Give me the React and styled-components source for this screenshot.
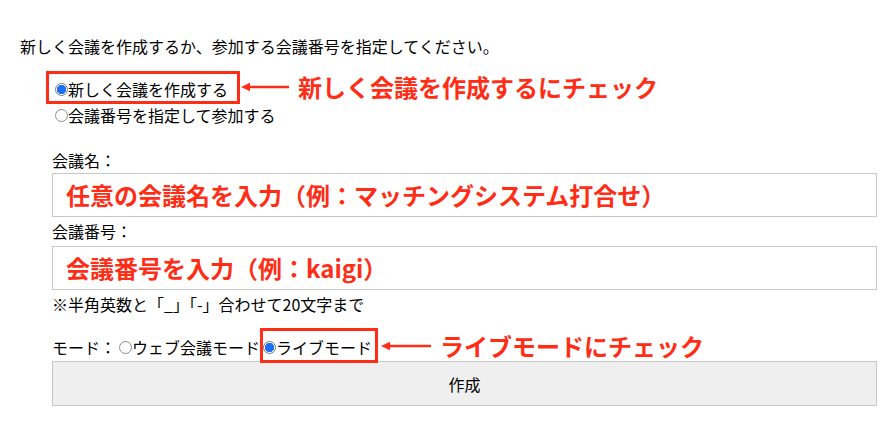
import React from "react"
import styled, { createGlobalStyle } from "styled-components"

const RED = "#ff2d16"

export default function App() {
  return (
    <Page>
      <GlobalStyle />
      <Intro>新しく会議を作成するか、参加する会議番号を指定してください。</Intro>
      <Form>
        <Choices>
          <Choice>
            <Radio type="radio" name="kind" defaultChecked />
            新しく会議を作成する
          </Choice>
          <Choice>
            <Radio type="radio" name="kind" />
            会議番号を指定して参加する
          </Choice>
        </Choices>

        <FieldLabel $mt={20}>会議名：</FieldLabel>
        <TextBox $mt={1} placeholder="任意の会議名を入力（例：マッチングシステム打合せ）" />

        <FieldLabel $mt={2}>会議番号：</FieldLabel>
        <TextBox $mt={3} placeholder="会議番号を入力（例：kaigi）" />
        <Note>※半角英数と「_」「-」合わせて20文字まで</Note>

        <ModeRow>
          モード：
          <Choice>
            <Radio type="radio" name="mode" />
            ウェブ会議モード
          </Choice>
          <Choice>
            <Radio type="radio" name="mode" defaultChecked />
            ライブモード
          </Choice>
        </ModeRow>
        <Submit type="button">作成</Submit>
      </Form>

      <Frame $x={46} $y={71} $w={194} $h={33} />
      <Callout $x={241} $y={70}>
        <Arrow width={48} />
        新しく会議を作成するにチェック
      </Callout>

      <Frame $x={260} $y={328} $w={118} $h={35} />
      <Callout $x={381} $y={329}>
        <Arrow width={50} />
        ライブモードにチェック
      </Callout>
    </Page>
  )
}

function Arrow({ width }) {
  return (
    <svg width={width} height="12" viewBox={`0 0 ${width} 12`}>
      <path d={`M8 6H${width}`} stroke={RED} strokeWidth="2.4" />
      <path d="M0 6L9 1.8V10.2Z" fill={RED} />
    </svg>
  )
}

const GlobalStyle = createGlobalStyle`
  body {
    margin: 0;
    background: #fff;
    color: #000;
    font-family: "Noto Sans CJK JP", "Noto Sans", sans-serif;
  }
`

const Page = styled.div`
  position: relative;
  width: 896px;
  height: 436px;
  box-sizing: border-box;
  padding: 34px 19px 0 20px;
  overflow: hidden;
  font-size: 16px;
`

const Intro = styled.div`
  line-height: 24px;
`

const Form = styled.form`
  margin-left: 32px;
  width: 825px;
`

const Choices = styled.div`
  margin-top: 18px;
  display: flex;
  flex-direction: column;
`

const Choice = styled.label`
  display: flex;
  align-items: center;
  height: 26px;
`

const Radio = styled.input`
  appearance: none;
  flex: none;
  box-sizing: border-box;
  width: 13px;
  height: 13px;
  margin: 0 0 0 3px;
  border: 1px solid #8e8e8e;
  border-radius: 50%;
  background: #fff;

  &:checked {
    border-color: #7a7a7a;
    background: radial-gradient(circle, #1b6ff5 0 4px, #3d86f7 4.5px, #fff 5px);
  }
`

const FieldLabel = styled.div`
  margin-top: ${(p) => p.$mt}px;
  line-height: 24px;
`

const TextBox = styled.input`
  display: block;
  width: 100%;
  height: 44px;
  box-sizing: border-box;
  margin: ${(p) => p.$mt}px 0 0;
  padding: 0 0 1px 13px;
  border: 1px solid #c8c8c8;
  font: 700 24px "Noto Sans CJK JP", sans-serif;
  outline: none;

  &::placeholder {
    color: ${RED};
    opacity: 1;
  }
`

const Note = styled.div`
  margin-top: 2px;
  line-height: 24px;
`

const ModeRow = styled.div`
  margin-top: 19px;
  display: flex;
  align-items: center;
  height: 24px;
`

const Submit = styled.button`
  display: block;
  width: 100%;
  height: 45px;
  margin-top: 2px;
  background: #efefef;
  border: 1px solid #c8c8c8;
  font: 16px "Noto Sans CJK JP", sans-serif;
  color: #000;
`

const Frame = styled.div`
  position: absolute;
  left: ${(p) => p.$x}px;
  top: ${(p) => p.$y}px;
  width: ${(p) => p.$w}px;
  height: ${(p) => p.$h}px;
  box-sizing: border-box;
  border: 3px solid ${RED};
`

const Callout = styled.div`
  position: absolute;
  left: ${(p) => p.$x}px;
  top: ${(p) => p.$y}px;
  display: flex;
  align-items: center;
  gap: 9px;
  height: 34px;
  color: ${RED};
  font: 700 24px/34px "Noto Sans CJK JP", sans-serif;
  white-space: nowrap;
`
